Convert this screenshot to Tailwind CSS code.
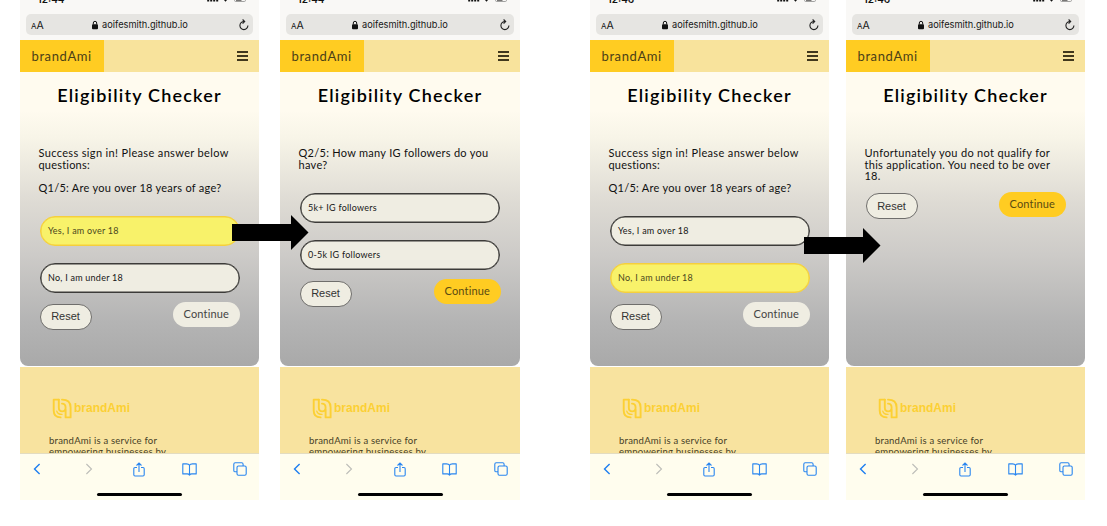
<!DOCTYPE html>
<html lang="en">
<head>
<meta charset="utf-8">
<title>brandAmi eligibility flow</title>
<script src="https://cdn.jsdelivr.net/npm/@tailwindcss/browser@4"></script>
</head>
<body class="bg-white">
<svg class="hidden">
  <symbol id="lock" viewBox="0 0 8 10"><rect x="1" y="4.2" width="6" height="5" rx="1" fill="#111"/><path d="M2.3 4.5V3a1.7 1.7 0 0 1 3.4 0v1.5" fill="none" stroke="#111" stroke-width="1"/></symbol>
  <symbol id="reload" viewBox="0 0 12 12"><path d="M5.2 2.6H6A4 4 0 1 0 9.9 6.6" fill="none" stroke="#222" stroke-width="1.1"/><path d="M4.6.5 6.700 2.600 4.600 4.700" fill="none" stroke="#222" stroke-width="1.100"/></symbol>
  <symbol id="menu" viewBox="0 0 11 10"><path d="M0 1h11M0 5h11M0 9h11" stroke="#41381d" stroke-width="1.8"/></symbol>
  <symbol id="status" viewBox="0 0 42 4"><path d="M1.2 0v1.6M4.2 0v1.6M7.2 0v1.6M10.2 0v1.6" stroke="#111" stroke-width="2"/><path d="M17 0h3l-1.5 1.8z" fill="#111"/><path d="M27.5-3v3.3q0 1.2 1.2 1.2h8.600q1.200 0 1.200-1.200V-3" fill="none" stroke="#999" stroke-width=".9"/><path d="M29 0h5.500v.6H29z" fill="#222"/></symbol>
  <symbol id="logo" viewBox="0 0 20 21"><g fill="none" stroke="#fcd034" stroke-width="1.900" stroke-linejoin="round" stroke-linecap="round"><path d="M6.800 1.600H1.700V12.500Q1.700 19.300 8.600 19.400"/><path d="M6.800 1.600V9.200Q6.800 13.400 10.200 13.400 13.600 13.400 13.600 9.700 13.600 5.600 10 5.600"/><path d="M10 1.600Q18.600 1.500 18.600 9.500V19.400H13.600V12"/><path d="M4.800 13.200Q5.700 16.300 10 16.400" stroke-width="1.300"/></g></symbol>
  <symbol id="back" viewBox="0 0 8 12"><path d="M6.600 1 1.500 6l5.100 5" fill="none" stroke="#1f7ff0" stroke-width="1.400"/></symbol>
  <symbol id="fwd" viewBox="0 0 8 12"><path d="M1.400 1l5.100 5-5.100 5" fill="none" stroke="#bdbdb8" stroke-width="1.100"/></symbol>
  <symbol id="share" viewBox="0 0 12 15"><path d="M4 5.500H2Q.8 5.500.8 6.700v6.100Q.8 14 2 14h8q1.200 0 1.200-1.200V6.700q0-1.200-1.200-1.200H8M6 10V1M3.500 3.500 6 1l2.500 2.500" fill="none" stroke="#2a86f0" stroke-width="1.100"/></symbol>
  <symbol id="book" viewBox="0 0 15 13"><path d="M7.500 2.200Q6.800.9 4.500.9H.8v10h4.400q1.600 0 2.300 1.200.7-1.200 2.300-1.200h4.400V.9h-3.700Q8.200.9 7.500 2.200v9.900" fill="none" stroke="#2a86f0" stroke-width="1.100" stroke-linejoin="round"/></symbol>
  <symbol id="tabs" viewBox="0 0 14 14"><path d="M4 9.800H2.200Q.8 9.800.8 8.400V2.200Q.8.8 2.200.8h6.500Q10.100.8 10.100 2.200V4" fill="none" stroke="#2a86f0" stroke-width="1.100"/><rect x="4" y="4" width="9.200" height="9.200" rx="1.400" fill="none" stroke="#2a86f0" stroke-width="1.100"/></symbol>
</svg>

<main class="relative flex h-[526px] w-[1107px] overflow-hidden pl-[20px]" id="board"></main>

<script>
const phones = [
  { time: '12:44', box: 'w-[239px] mr-[21px]',
    text: [['Success sign in! Please answer below', 'tracking-[0.35px]'], ['questions:', 'tracking-[0.2px]'], ['', ''], ['Q1/5: Are you over 18 years of age?', 'tracking-[0.26px]']],
    options: [['Yes, I am over 18', true], ['No, I am under 18', false]], ready: false },
  { time: '12:44', box: 'w-[240px] mr-[70px]',
    text: [['Q2/5: How many IG followers do you', 'tracking-[0.28px]'], ['have?', 'tracking-[0.3px]']],
    options: [['5k+ IG followers', false], ['0-5k IG followers', false]], ready: true },
  { time: '12:46', box: 'w-[239px] mr-[17px]',
    text: [['Success sign in! Please answer below', 'tracking-[0.35px]'], ['questions:', 'tracking-[0.2px]'], ['', ''], ['Q1/5: Are you over 18 years of age?', 'tracking-[0.26px]']],
    options: [['Yes, I am over 18', false], ['No, I am under 18', true]], ready: false },
  { time: '12:46', box: 'w-[239px]',
    text: [['Unfortunately you do not qualify for', 'tracking-[0.33px]'], ['this application. You need to be over', 'tracking-[0.3px]'], ['18.', 'tracking-[0.2px]']],
    options: [], ready: true },
];

const option = ([label, on]) => `
  <div class="flex h-[30px] w-[200px] items-center rounded-[15px] border pl-[7.500px] text-[9px] tracking-[0.24px] ${on ? 'border-[#f5cf3c] bg-[#f8f26a] text-[#4a4720] shadow-[inset_0_0_0_0.5px_#f5cf3c]' : 'border-[#3c3b39] bg-[#efede2] text-[#161616] shadow-[inset_0_0_0_0.5px_#3c3b39]'}">${label}</div>`;

const phone = p => `
<section class="flex h-[500px] shrink-0 flex-col ${p.box} font-['Lato','Open_Sans',sans-serif]">
  <div class="flex h-[40px] shrink-0 flex-col bg-[#f9f8f6] px-[6px] font-['Inter',sans-serif]">
    <div class="flex h-[14px] shrink-0 justify-between overflow-hidden pr-[4px] pl-[11.500px]">
      <span class="-mt-[7px] text-[10px] leading-[12px] font-semibold text-[#111]">${p.time}</span>
      <svg class="h-[4px] w-[42px]"><use href="#status"/></svg>
    </div>
    <div class="flex h-[21px] items-center rounded-[5px] bg-[#e6e5e2] pr-[3px] pl-[5px] text-[#161616]">
      <span class="mb-[3px] w-[60px] leading-none"><span class="text-[8px]">A</span><span class="text-[10.500px]">A</span></span>
      <svg class="h-[10px] w-[8px]"><use href="#lock"/></svg>
      <span class="ml-[3px] flex-1 text-[9.250px] leading-none whitespace-nowrap">aoifesmith.github.io</span>
      <svg class="h-[12px] w-[12px]"><use href="#reload"/></svg>
    </div>
  </div>
  <header class="flex h-[32px] shrink-0 items-center justify-between bg-[#f8e39c] pr-[11px]">
    <div class="flex h-full w-[83.500px] items-center bg-[#ffcc22] pt-[1px] pl-[11.500px] text-[13px] tracking-[0.6px] text-[#4b4017]">brandAmi</div>
    <svg class="h-[10px] w-[11px]"><use href="#menu"/></svg>
  </header>
  <div class="flex h-[294px] shrink-0 flex-col rounded-b-[8px] bg-[linear-gradient(#fffbef_0%,#fffbef_13%,#f8f5e8_22%,#dedbd4_44%,#cdcbc8_62%,#b4b4b4_85%,#a9a9a9_100%)]">
    <h1 class="mt-[11px] h-[24px] shrink-0 text-center text-[18px] leading-[24px] font-semibold tracking-[1.200px] text-black">Eligibility Checker</h1>
    <div class="mt-[40px] pl-[18.500px] text-[11px] leading-[11.500px] text-[#111]">${p.text.map(([t, c]) => `<p class="h-[11.500px] whitespace-nowrap ${c}">${t}</p>`).join('')}</div>
    ${p.options.length ? `<div class="mt-[23px] flex flex-col gap-[17px] pl-[19.500px]">${p.options.map(option).join('')}</div>` : ''}
    <div class="${p.options.length ? 'mt-[9px]' : 'mt-[10px]'} flex justify-between pr-[19px] pl-[19.500px]">
      <button class="mt-[1.500px] h-[26px] w-[52px] rounded-full border border-[#6f6e6c] bg-[#efede2] font-['Liberation_Sans',Arial,sans-serif] text-[11px] text-[#333]">Reset</button>
      <button class="h-[25px] w-[67.500px] rounded-full text-[11px] tracking-[0.150px] ${p.ready ? 'bg-[#ffcc22] text-[#5a4a12]' : 'bg-[#efede2] text-[#444]'}">Continue</button>
    </div>
  </div>
  <footer class="mt-[1px] flex h-[86px] shrink-0 flex-col overflow-hidden bg-[#f8e39f] pl-[29px] text-[9.500px] leading-[11.500px] text-[#463e26]">
    <div class="mt-[31px] flex h-[21px] shrink-0 items-center pl-[3px]">
      <svg class="h-[21px] w-[20px]"><use href="#logo"/></svg>
      <span class="mt-[1px] ml-[2px] font-['Liberation_Sans',Arial,sans-serif] text-[12px] font-bold text-[#fcd034]">brandAmi</span>
    </div>
    <p class="mt-[15.500px] h-[11.500px] shrink-0 tracking-[0.22px] whitespace-nowrap">brandAmi is a service for</p>
    <p class="h-[11.500px] shrink-0 tracking-[0.23px] whitespace-nowrap">empowering businesses by</p>
  </footer>
  <nav class="flex h-[47px] shrink-0 flex-col items-center border-t border-[#e3dcc0] bg-[#fffdee]">
    <div class="flex h-[30px] w-full items-center justify-between pr-[12px] pl-[13px]">
      <svg class="h-[12px] w-[8px]"><use href="#back"/></svg>
      <svg class="ml-[7px] h-[12px] w-[8px]"><use href="#fwd"/></svg>
      <svg class="ml-[4px] h-[15px] w-[12px]"><use href="#share"/></svg>
      <svg class="h-[13px] w-[15px]"><use href="#book"/></svg>
      <svg class="h-[14px] w-[14px]"><use href="#tabs"/></svg>
    </div>
    <div class="mt-[9px] h-[3px] w-[85px] rounded-full bg-black"></div>
  </nav>
</section>`;

document.getElementById('board').innerHTML = phones.map(phone).join('') + `
  <svg class="absolute top-[215px] left-[232px] h-[35px] w-[77px]" viewBox="0 0 77 35"><path d="M0 9h59V0l17.500 17.500L59 35V26H0z"/></svg>
  <svg class="absolute top-[228px] left-[804px] h-[35px] w-[77px]" viewBox="0 0 77 35"><path d="M0 9h59V0l17.500 17.500L59 35V26H0z"/></svg>`;
</script>
</body>
</html>
